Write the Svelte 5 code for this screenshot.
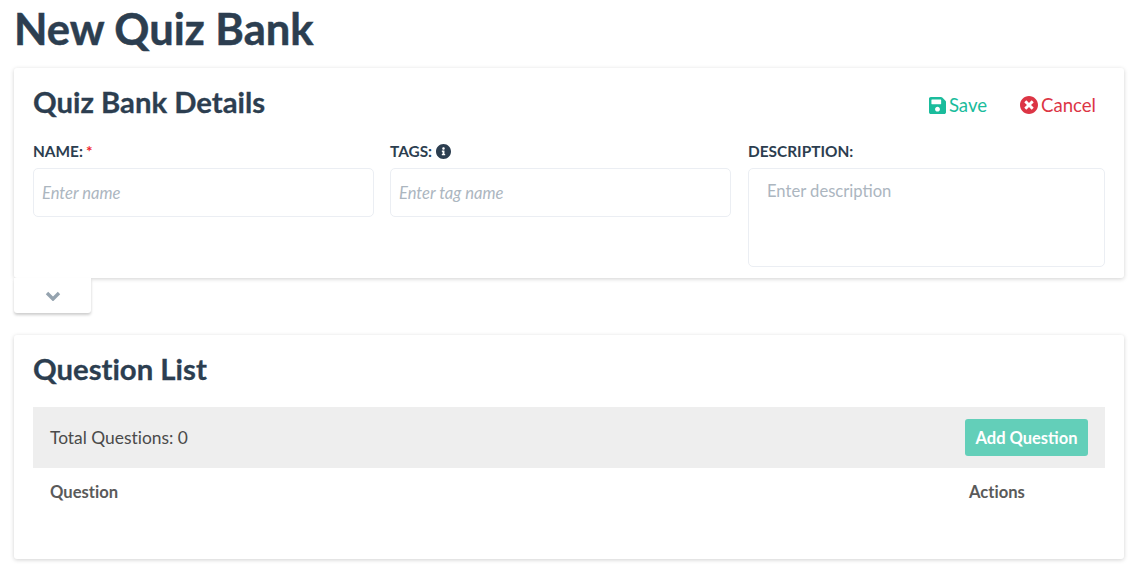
<script lang="ts">
	let nombre = $state('');
	let tags = $state('');
	let descripcion = $state('');
</script>

<div class="pagina">
	<h1>New Quiz Bank</h1>

	<div class="zona-detalles">
		<section class="tarjeta detalles">
			<div class="cabecera">
				<h2>Quiz Bank Details</h2>
				<div class="acciones">
					<button class="btn-link verde">
						<svg width="17" height="17" viewBox="0 32 448 448" fill="currentColor"><path d="M433.9 129.9l-83.9-83.9A48 48 0 0 0 316.1 32H48C21.5 32 0 53.5 0 80v352c0 26.5 21.5 48 48 48h352c26.5 0 48-21.5 48-48V163.9a48 48 0 0 0-14.1-34zM224 416c-35.3 0-64-28.7-64-64s28.7-64 64-64 64 28.7 64 64-28.7 64-64 64zm96-304.5V212c0 6.6-5.4 12-12 12H76c-6.6 0-12-5.4-12-12V108c0-6.6 5.4-12 12-12h228.5c3.2 0 6.2 1.3 8.5 3.5l3.5 3.5c2.2 2.2 3.5 5.3 3.5 8.5z"/></svg>
						Save
					</button>
					<button class="btn-link rojo">
						<svg width="18" height="18" viewBox="8 8 496 496" fill="currentColor"><path d="M256 8C119 8 8 119 8 256s111 248 248 248 248-111 248-248S393 8 256 8zm121.6 313.1c4.7 4.7 4.7 12.3 0 17L338 377.6c-4.7 4.7-12.3 4.7-17 0L256 312l-65.1 65.6c-4.7 4.7-12.3 4.7-17 0L134.4 338c-4.7-4.7-4.7-12.3 0-17l65.6-65-65.6-65.1c-4.7-4.7-4.7-12.3 0-17l39.6-39.6c4.7-4.7 12.3-4.7 17 0l65 65.7 65.1-65.6c4.7-4.7 12.3-4.7 17 0l39.6 39.6c4.7 4.7 4.7 12.3 0 17L312 256l65.6 65.1z"/></svg>
						Cancel
					</button>
				</div>
			</div>

			<div class="campos">
				<div class="campo">
					<label for="nombre">NAME:<span class="requerido">*</span></label>
					<input id="nombre" placeholder="Enter name" bind:value={nombre} />
				</div>
				<div class="campo">
					<label for="tags">TAGS:
						<svg class="info" width="15" height="15" viewBox="8 8 496 496" fill="currentColor"><path d="M256 8C119 8 8 119 8 256s111 248 248 248 248-111 248-248S393 8 256 8zm0 110c23.2 0 42 18.8 42 42s-18.8 42-42 42-42-18.8-42-42 18.8-42 42-42zm56 254c0 6.6-5.4 12-12 12h-88c-6.6 0-12-5.4-12-12v-24c0-6.6 5.4-12 12-12h12v-64h-12c-6.6 0-12-5.4-12-12v-24c0-6.6 5.4-12 12-12h64c6.6 0 12 5.4 12 12v100h12c6.6 0 12 5.4 12 12v24z"/></svg>
					</label>
					<input id="tags" placeholder="Enter tag name" bind:value={tags} />
				</div>
				<div class="campo descripcion">
					<label for="descripcion">DESCRIPTION:</label>
					<textarea id="descripcion" placeholder="Enter description" bind:value={descripcion}></textarea>
				</div>
			</div>
		</section>
		<button class="plegar" aria-label="Expand">
			<svg width="16" height="10" viewBox="0 0 16 10" fill="none" stroke="currentColor" stroke-width="3.4"><path d="M2 2l6 6 6-6"/></svg>
		</button>
	</div>

	<section class="tarjeta lista">
		<h2>Question List</h2>
		<div class="barra">
			<span>Total Questions: 0</span>
			<button class="btn-add">Add Question</button>
		</div>
		<div class="columnas">
			<span>Question</span>
			<span class="col-acciones">Actions</span>
		</div>
	</section>
</div>

<style>
	:global(body) {
		background: #fff;
		font-family: Lato, sans-serif;
		font-variant-ligatures: none;
		color: #2c3e50;
	}

	.pagina {
		padding: 0 14px 15px;
	}

	h1 {
		margin: 0;
		height: 68px;
		padding-top: 2px;
		box-sizing: border-box;
		font-size: 43.5px;
		line-height: 52px;
		font-weight: 700;
		color: #2c3e50;
		-webkit-text-stroke: 0.5px #2c3e50;
	}

	h2 {
		margin: 0;
		font-size: 29.3px;
		line-height: 35px;
		font-weight: 700;
		color: #2c3e50;
		-webkit-text-stroke: 0.3px #2c3e50;
	}

	.tarjeta {
		background: #fff;
		border-radius: 3px;
		box-shadow: 0 1px 4px rgba(0, 0, 0, 0.18);
	}

	.detalles {
		height: 210px;
		box-sizing: border-box;
		padding: 16px 19px 0;
	}

	.cabecera {
		display: flex;
		justify-content: space-between;
		align-items: flex-start;
	}

	.acciones {
		display: flex;
		gap: 33px;
		padding: 10px 9px 0 0;
	}

	.btn-link {
		display: flex;
		align-items: center;
		gap: 3px;
		background: none;
		border: none;
		padding: 0;
		font-family: inherit;
		font-size: 18.6px;
		cursor: pointer;
	}

	.verde {
		color: #1abc9c;
	}

	.rojo {
		color: #dc3545;
	}

	.campos {
		display: grid;
		grid-template-columns: 341px 341px 1fr;
		gap: 16px;
		margin-top: 22px;
	}

	.campo label {
		display: block;
		font-size: 15.4px;
		font-weight: 700;
		line-height: 20px;
		margin-bottom: 7px;
	}

	.descripcion {
		margin-left: 1px;
	}

	.requerido {
		color: #f01f2f;
		margin-left: 3px;
	}

	.info {
		vertical-align: -2px;
	}

	input,
	textarea {
		display: block;
		width: 100%;
		box-sizing: border-box;
		border: 1px solid #ebeef3;
		border-radius: 5px;
		background: #fff;
		font-family: inherit;
		color: #2c3e50;
	}

	input {
		height: 49px;
		padding: 0 8px;
		font-size: 16.6px;
	}

	input::placeholder {
		font-style: italic;
		color: #acb6bf;
	}

	textarea {
		height: 99px;
		padding: 12px 18px;
		font-size: 16.6px;
		resize: none;
	}

	textarea::placeholder {
		color: #acb6bf;
	}

	.plegar {
		display: flex;
		align-items: center;
		justify-content: center;
		width: 77px;
		height: 35px;
		padding: 0;
		border: none;
		background: #fff;
		border-radius: 0 0 3px 3px;
		box-shadow: 0 2px 3px rgba(0, 0, 0, 0.2);
		color: #95a3af;
	}

	.lista {
		margin-top: 22px;
		height: 224px;
		box-sizing: border-box;
		padding: 16px 19px 0;
	}

	.barra {
		display: flex;
		justify-content: space-between;
		align-items: center;
		height: 61px;
		margin-top: 21px;
		padding: 0 17px;
		background: #eee;
		font-size: 17.4px;
		color: #4a4a4a;
	}

	.btn-add {
		height: 37px;
		width: 123px;
		padding: 0;
		border: none;
		border-radius: 3px;
		background: #63cfb9;
		color: #fff;
		font-family: inherit;
		font-size: 16.5px;
		font-weight: 700;
	}

	.columnas {
		display: flex;
		justify-content: space-between;
		padding: 14px 17px;
		font-size: 16.6px;
		font-weight: 700;
		color: #5a5a5a;
	}

	.col-acciones {
		width: 119px;
	}
</style>
